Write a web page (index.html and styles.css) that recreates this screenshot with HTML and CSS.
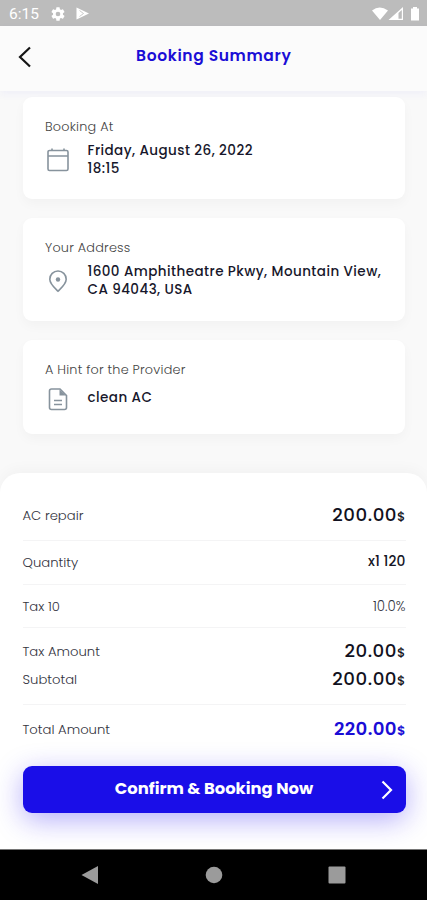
FILE: index.html
```html
<!DOCTYPE html>
<html lang="en">
<head>
<meta charset="utf-8">
<title>Booking Summary</title>
<link rel="stylesheet" href="styles.css">
</head>
<body>
<div class="status">
  <span class="clock">6:15</span>
  <svg class="gear" width="16" height="16" viewBox="0 0 24 24"><path fill="#fff" fill-rule="evenodd" d="M19.400 13a7.500 7.500 0 0 0 0-2l2.100-1.650a.5.5 0 0 0 .12-.64l-2-3.460a.5.5 0 0 0-.61-.22l-2.490 1a7.300 7.300 0 0 0-1.690-.98l-.38-2.650A.5.5 0 0 0 14 2h-4a.5.5 0 0 0-.49.42l-.38 2.650a7.700 7.700 0 0 0-1.690.98l-2.490-1a.5.5 0 0 0-.61.22l-2 3.460a.5.5 0 0 0 .12.64L4.600 11a8 8 0 0 0 0 2l-2.110 1.650a.5.5 0 0 0-.12.64l2 3.460a.5.5 0 0 0 .61.22l2.490-1a7.300 7.300 0 0 0 1.690.98l.38 2.650A.5.5 0 0 0 10 22h4a.5.5 0 0 0 .49-.42l.38-2.650a7.700 7.700 0 0 0 1.690-.98l2.490 1a.5.5 0 0 0 .61-.22l2-3.460a.5.5 0 0 0-.12-.64zM12 15.500a3.500 3.500 0 1 1 0-7 3.500 3.500 0 0 1 0 7z"/></svg>
  <svg class="play" width="14" height="13" viewBox="0 0 14 13"><path fill="#fff" d="M.5.5 13 6.500.5 12.500z"/><path d="m3.500 3.500 4 3-4 3" fill="none" stroke="#bcbcbc" stroke-width=".8"/></svg>
  <svg class="signals" width="50" height="16" viewBox="0 0 50 16"><path fill="#fff" d="M1 4.500Q8.500-1.500 17 4.500L9 14zM17.500 14 32 1v13z"/><path fill="#bcbcbc" d="M27.500 7 30.800 4v8.700h-3.300z"/><path fill="#fff" d="M40 2.500h2V1h4v1.500h2v12h-8z"/></svg>
</div>
<header class="header">
  <svg width="14" height="22" viewBox="0 0 14 22"><path d="M12 1.500 2 11l10 9.500" fill="none" stroke="#151515" stroke-width="2.200"/></svg>
  <h1>Booking Summary</h1>
</header>
<main class="cards">
  <section class="card card-date">
    <h2>Booking At</h2>
    <div class="detail">
      <svg width="26" height="26" viewBox="0 0 26 26"><path d="M4.500 3.500h17a1.500 1.500 0 0 1 1.500 1.500v17a1.500 1.500 0 0 1-1.500 1.500h-17A1.500 1.500 0 0 1 3 22V5a1.500 1.500 0 0 1 1.500-1.500zM3 9h20M7 1.500v2M19 1.500v2"/></svg>
      <p>Friday, August 26, 2022<br>18:15</p>
    </div>
  </section>
  <section class="card card-address">
    <h2>Your Address</h2>
    <div class="detail">
      <svg width="26" height="26" viewBox="0 0 26 26"><path d="M13 23.200C10.500 20.700 4.800 16 4.800 11.200a8.200 8.200 0 0 1 16.400 0c0 4.800-5.700 9.500-8.200 12z"/><circle class="dot" cx="13" cy="11.500" r="2.200"/></svg>
      <p>1600 Amphitheatre Pkwy, Mountain View,<br>CA 94043, USA</p>
    </div>
  </section>
  <section class="card card-hint">
    <h2>A Hint for the Provider</h2>
    <div class="detail">
      <svg width="26" height="26" viewBox="0 0 26 26"><path d="M6.500 3H15l6.500 6.500v12a2 2 0 0 1-2 2h-13a2 2 0 0 1-2-2V5a2 2 0 0 1 2-2zM9 14.500h8M9 18.500h8"/><path class="dot" d="M14.500 3.500v6H21z"/></svg>
      <p>clean AC</p>
    </div>
  </section>
</main>
<section class="sheet">
  <div class="row r1"><span>AC repair</span><b class="money">200.00<small>$</small></b></div>
  <div class="row r2"><span>Quantity</span><b class="count">x1 120</b></div>
  <div class="row r3"><span>Tax 10</span><span class="percent">10.0%</span></div>
  <div class="row r4"><span>Tax Amount</span><b class="money">20.00<small>$</small></b></div>
  <div class="row r5"><span>Subtotal</span><b class="money">200.00<small>$</small></b></div>
  <div class="row r6"><span>Total Amount</span><b class="money total">220.00<small>$</small></b></div>
  <button class="confirm"><span>Confirm &amp; Booking Now</span>
    <svg width="12" height="20" viewBox="0 0 12 20"><path d="m1.500 1.500 8.500 8.500-8.500 8.500" fill="none" stroke="#fff" stroke-width="2.200"/></svg>
  </button>
</section>
<nav class="nav">
  <svg width="18" height="20" viewBox="0 0 18 20"><path d="M.5 10 17 1v18z"/></svg>
  <svg width="18" height="18" viewBox="0 0 18 18"><circle cx="9" cy="9" r="8.300"/></svg>
  <svg width="18" height="18" viewBox="0 0 18 18"><rect x=".5" y=".5" width="17" height="17" rx="1"/></svg>
</nav>
</body>
</html>
```
FILE: styles.css
```css
* { box-sizing: border-box; margin: 0; padding: 0; }
body {
  width: 427px; height: 900px; overflow: hidden;
  display: flex; flex-direction: column;
  background: #f9f9f9; color: #17172b;
  font-family: Poppins, Inter, "Liberation Sans", sans-serif;
}
svg { display: block; flex: none; }
.status { height: 26px; flex: none; display: flex; align-items: center; background: #bcbcbc; padding: 1px 7px 0 9px; }
.clock { width: 41px; font: 400 15.5px/26px Roboto, sans-serif; color: #fff; }
.gear { margin-right: 10px; }
.signals { margin-left: auto; margin-right: -1px; }
.header { height: 65px; flex: none; display: flex; align-items: center; padding: 0 18px 4px 17.5px; background: #fbfbfb; box-shadow: 0 3px 8px rgba(60, 50, 240, .05); }
.header h1 { flex: 1; text-align: center; margin: 0 13px 2px 0; font-size: 15.5px; line-height: 24px; font-weight: 600; color: #1a0dd6; letter-spacing: .63px; }
.cards { flex: none; height: 382px; padding: 6px 22px 0 22.500px; display: flex; flex-direction: column; }
.card { background: #fff; border-radius: 9px; padding: 21px 20px 0 22.500px; box-shadow: 0 5px 12px rgba(0, 0, 0, .03); flex: none; }
.card-date { height: 102px; margin-bottom: 19px; }
.card-address { height: 103px; margin-bottom: 19px; }
.card-hint { height: 94px; }
.card h2 { font-size: 12.8px; line-height: 18px; font-weight: 300; letter-spacing: .22px; color: #444; white-space: nowrap; }
.detail { display: flex; margin-top: 6px; }
.detail svg { margin: 5px 16.500px 0 0; fill: none; stroke: #87939d; stroke-width: 1.6; }
.detail svg .dot { fill: #87939d; stroke: none; }
.detail p { font-size: 13.5px; line-height: 17.500px; font-weight: 500; letter-spacing: .44px; white-space: nowrap; }
.card-hint svg { margin-top: 1px; }
.card-hint p { padding-top: 4px; }
.sheet { height: 376px; flex: none; position: relative; background: #fff; border-radius: 20px 20px 0 0; padding: 16px 21.500px 0 22.500px; box-shadow: 0 -4px 14px rgba(0, 0, 0, .03); overflow: hidden; }
.row { display: flex; align-items: center; justify-content: space-between; border-bottom: 1px solid #f4f4f5; font-size: 13.2px; font-weight: 300; color: #333340; }
.r1 { height: 52px; padding-top: 3px; }
.r2 { height: 44px; }
.r3 { height: 43px; padding-top: 1px; }
.r4 { height: 37px; border: 0; padding-top: 11px; }
.r5 { height: 40px; padding-bottom: 9px; }
.r6 { height: 49px; border: 0; }
.money { font-size: 18.2px; line-height: 28px; font-weight: 500; letter-spacing: .55px; color: #111120; }
.money small { font-size: 13px; letter-spacing: 0; }
.money.total { color: #1a0dd6; font-weight: 600; letter-spacing: .35px; }
.count { font-size: 13.8px; font-weight: 500; letter-spacing: .1px; color: #151525; padding-bottom: 2px; }
.percent { font-size: 13.4px; }
.confirm { display: flex; align-items: center; width: 383px; height: 47px; margin-top: 12px; border: 0; border-radius: 9px; background: #1a0ee8; color: #fff; padding: 0 13px 0 25px; font: 700 16.4px/24px Poppins, Inter, sans-serif; box-shadow: 0 7px 28px rgba(40, 20, 240, .35); }
.confirm span { flex: 1; text-align: center; white-space: nowrap; padding-bottom: 2px; }
.nav { height: 51px; flex: none; display: flex; align-items: center; justify-content: space-between; background: #000; border-top: 1px solid #777; padding: 0 81px; fill: #9b9b9b; }
```
